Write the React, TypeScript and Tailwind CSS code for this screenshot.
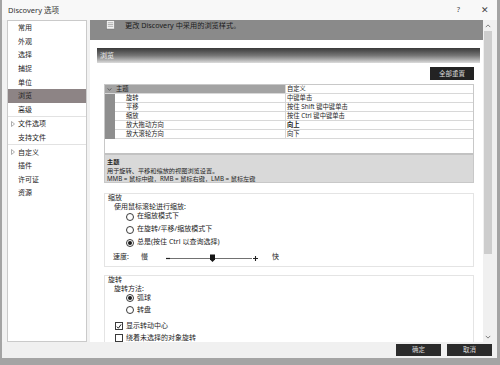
import React from "react";

type NavItem = { label: string; expandable?: boolean; selected?: boolean; sepAfter?: boolean };

const navItems: NavItem[] = [
  { label: "常用" },
  { label: "外观" },
  { label: "选择" },
  { label: "捕捉" },
  { label: "单位" },
  { label: "浏览", selected: true },
  { label: "高级", sepAfter: true },
  { label: "文件选项", expandable: true },
  { label: "支持文件", sepAfter: true },
  { label: "自定义", expandable: true },
  { label: "插件" },
  { label: "许可证" },
  { label: "资源" },
];

const gridRows = [
  { label: "旋转", value: "中键单击" },
  { label: "平移", value: "按住 Shift 键中键单击" },
  { label: "缩放", value: "按住 Ctrl 键中键单击" },
  { label: "放大拖动方向", value: "向上", bold: true },
  { label: "放大滚轮方向", value: "向下" },
];

function Radio({ checked }: { checked?: boolean }) {
  return (
    <span className="w-[8px] h-[8px] rounded-full border border-[#3a3a3a] bg-white flex items-center justify-center shrink-0">
      {checked && <span className="w-[4px] h-[4px] rounded-full bg-[#1a1a1a]" />}
    </span>
  );
}

function Check({ checked }: { checked?: boolean }) {
  return (
    <span className="w-[8px] h-[8px] border border-[#3a3a3a] bg-white flex items-center justify-center shrink-0">
      {checked && (
        <svg viewBox="0 0 8 8" className="w-[7px] h-[7px]">
          <path d="M1.2 4.2 L3.2 6.3 L6.8 1.2" stroke="#111" strokeWidth="1.3" fill="none" />
        </svg>
      )}
    </span>
  );
}

function Chevron({ up }: { up?: boolean }) {
  return (
    <svg viewBox="0 0 8 5" className="w-[6px] h-[4px]">
      <path d={up ? "M1 4 L4 1 L7 4" : "M1 1 L4 4 L7 1"} stroke="#555" strokeWidth="1" fill="none" />
    </svg>
  );
}

export default function App() {
  return (
    <div className="w-[500px] h-[365px] overflow-hidden bg-[#a4a4a4] pl-[2px] pr-[3px] pb-[7px] font-['Noto_Sans','Noto_Sans_CJK_SC',sans-serif] text-[#1e1e1e]">
      <div className="h-full flex flex-col bg-[#f2f2f2]">
        {/* title bar */}
        <div className="h-[20px] shrink-0 flex items-center bg-[#f8f8f8]">
          <span className="pl-[6px] text-[7.5px] leading-[10px] text-[#333]">Discovery 选项</span>
          <div className="ml-auto flex items-center text-[#444]">
            <span className="text-[7.5px] mr-[21px]">?</span>
            <span className="text-[9px] mr-[8px]">✕</span>
          </div>
        </div>

        {/* body */}
        <div className="h-[322px] shrink-0 flex">
          {/* nav */}
          <div className="ml-[5px] w-[80px] border border-[#cacaca] bg-white text-[7px]">
            {navItems.map((item) => (
              <div key={item.label} className={item.sepAfter ? "border-b border-[#e2e2e2]" : ""}>
                <div
                  className={`h-[13.6px] flex items-center pl-[10px] relative ${
                    item.selected ? "bg-[#8d8485]" : ""
                  }`}
                >
                  {item.expandable && (
                    <svg viewBox="0 0 4 6" className="absolute left-[3px] w-[4px] h-[6px]">
                      <path d="M0.5 0.5 L3.5 3 L0.5 5.5 Z" stroke="#9a9a9a" strokeWidth="0.8" fill="none" />
                    </svg>
                  )}
                  <span className="leading-[9px]">{item.label}</span>
                </div>
              </div>
            ))}
          </div>

          {/* right panel */}
          <div className="ml-[3px] flex-1 flex bg-white">
            <div className="flex-1 overflow-hidden flex flex-col">
              {/* header band */}
              <div className="h-[20px] shrink-0 bg-[#8a8a8a] flex items-start">
                <svg viewBox="0 0 10 10" className="ml-[16px] w-[9px] h-[10px]">
                  <rect x="0.5" y="0" width="9" height="9.5" fill="#f2f2f2" stroke="#6d6d6d" strokeWidth="0.6" />
                  <path d="M2 2.5 H8 M2 4.5 H8 M2 6.5 H8" stroke="#8a8a8a" strokeWidth="0.7" />
                </svg>
                <span className="ml-[10px] mt-[1px] text-[7.2px] leading-[9px] text-[#1a1a1a]">
                  更改 Discovery 中采用的浏览样式。
                </span>
              </div>

              {/* section bar */}
              <div className="mt-[8px] ml-[7px] mr-[3px] h-[15px] shrink-0 bg-gradient-to-b from-[#3a3a3a] via-[#767676] to-[#dcdcdc] flex items-center">
                <span className="pl-[3px] text-[7px] leading-[9px] text-[#eeeeee]">浏览</span>
              </div>

              {/* reset button */}
              <div className="mt-[4px] shrink-0 flex justify-end pr-[9px]">
                <div className="w-[44px] h-[13px] bg-[#232323] flex items-center justify-center text-[6.5px] text-[#dcdcdc]">
                  全部重置
                </div>
              </div>

              {/* property grid */}
              <div className="mt-[4px] ml-[14px] mr-[9px] h-[99px] shrink-0 border border-[#c8c8c8] flex flex-col text-[6.3px] leading-[8px]">
                <div className="h-[9px] flex border-b border-[#d8d8d8]">
                  <div className="w-[180px] bg-[#a3a3a3] flex items-center">
                    <svg viewBox="0 0 6 4" className="ml-[2px] w-[5px] h-[3px]">
                      <path d="M0.5 0.5 L3 3.2 L5.5 0.5" stroke="#333" strokeWidth="0.8" fill="none" />
                    </svg>
                    <span className="ml-[4px]">主题</span>
                  </div>
                  <div className="flex-1 pl-[1px] border-l border-[#d8d8d8] flex items-center">自定义</div>
                </div>
                {gridRows.map((r) => (
                  <div key={r.label} className="h-[9px] flex">
                    <div className="w-[10px] bg-[#8e8e8e]" />
                    <div className="w-[170px] pl-[11px] border-b border-[#d8d8d8] flex items-center">{r.label}</div>
                    <div
                      className={`flex-1 pl-[1px] border-l border-b border-[#d8d8d8] flex items-center ${
                        r.bold ? "font-bold" : ""
                      }`}
                    >
                      {r.value}
                    </div>
                  </div>
                ))}
                <div className="flex-1" />
                <div className="h-[2px] bg-[#c2c2c2]" />
                <div className="h-[27px] bg-[#d9d9d9] pt-[3px] pl-[2px] text-[6.2px] leading-[8.5px] overflow-hidden">
                  <div className="font-bold">主题</div>
                  <div>用于旋转、平移和缩放的视图浏览设置。</div>
                  <div>MMB = 鼠标中键，RMB = 鼠标右键，LMB = 鼠标左键</div>
                </div>
              </div>

              {/* zoom group */}
              <div className="mt-[10px] ml-[14px] mr-[9px] shrink-0 border border-[#e4e4e4] text-[7px]">
                <div className="h-[8px] leading-[8px] pl-[3px]">缩放</div>
                <div className="h-[7px] leading-[7px] pl-[9px] mt-[1px]">使用鼠标滚轮进行缩放:</div>
                <div className="h-[13px] flex items-center pl-[21px] gap-[3px]">
                  <Radio />
                  <span>在缩放模式下</span>
                </div>
                <div className="h-[13px] flex items-center pl-[21px] gap-[3px]">
                  <Radio />
                  <span>在旋转/平移/缩放模式下</span>
                </div>
                <div className="h-[13px] flex items-center pl-[21px] gap-[3px]">
                  <Radio checked />
                  <span>总是(按住 Ctrl 以查询选择)</span>
                </div>
                <div className="h-[17px] flex items-center pl-[8px]">
                  <span className="w-[28px]">速度:</span>
                  <span className="w-[22px]">慢</span>
                  <svg viewBox="0 0 100 10" className="w-[100px] h-[10px]">
                    <path d="M3 5.5 H7" stroke="#222" strokeWidth="1.2" />
                    <path d="M7 5.5 H89" stroke="#333" strokeWidth="0.7" />
                    <path d="M47 1.5 H52 V6.5 L49.5 9 L47 6.5 Z" fill="#151515" />
                    <path d="M90 5.5 H95 M92.5 3 V8" stroke="#222" strokeWidth="1.1" />
                  </svg>
                  <span className="ml-[9px]">快</span>
                </div>
              </div>

              {/* rotate group */}
              <div className="mt-[8px] ml-[14px] mr-[9px] h-[80px] shrink-0 border border-[#e4e4e4] text-[7px]">
                <div className="h-[8px] leading-[8px] pl-[3px]">旋转</div>
                <div className="h-[7px] leading-[7px] pl-[9px] mt-[1px]">旋转方法:</div>
                <div className="h-[12px] flex items-center pl-[21px] gap-[3px]">
                  <Radio checked />
                  <span>弧球</span>
                </div>
                <div className="h-[12px] flex items-center pl-[21px] gap-[3px]">
                  <Radio />
                  <span>转盘</span>
                </div>
                <div className="mt-[4px] h-[12px] flex items-center pl-[10px] gap-[3px]">
                  <Check checked />
                  <span>显示转动中心</span>
                </div>
                <div className="h-[12px] flex items-center pl-[10px] gap-[3px]">
                  <Check />
                  <span>绕着未选择的对象旋转</span>
                </div>
              </div>
            </div>

            {/* scrollbar */}
            <div className="w-[14px] bg-[#f0f0f0] flex flex-col items-start">
              <div className="h-[11px] w-[10px] flex items-center justify-center">
                <Chevron up />
              </div>
              <div className="ml-[1px] w-[8px] h-[223px] bg-[#cdcdcd]" />
              <div className="flex-1" />
              <div className="h-[11px] w-[10px] flex items-center justify-center">
                <Chevron />
              </div>
            </div>
          </div>
        </div>

        {/* footer */}
        <div className="h-[16px] shrink-0 flex items-center justify-end gap-[6px] pr-[5px] bg-[#f0f0f0]">
          <div className="w-[45px] h-[12px] bg-[#2b2b2b] flex items-center justify-center text-[6.5px] text-[#d8d8d8]">
            确定
          </div>
          <div className="w-[45px] h-[12px] bg-[#2b2b2b] flex items-center justify-center text-[6.5px] text-[#d8d8d8]">
            取消
          </div>
        </div>
      </div>
    </div>
  );
}
